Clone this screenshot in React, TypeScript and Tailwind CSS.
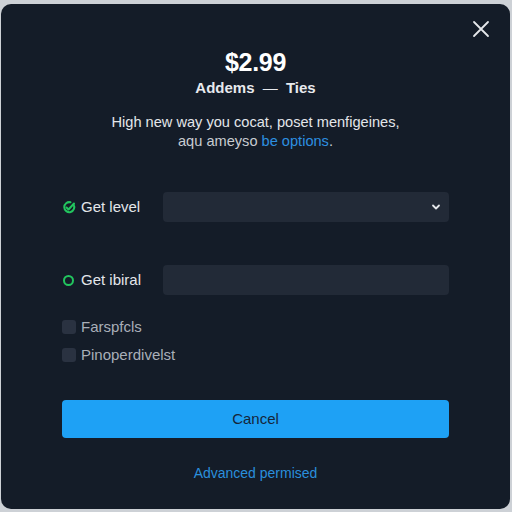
import React from "react";

export default function App() {
  return (
    <div className="w-[512px] h-[512px] bg-[#cdd1d6] pt-[4px] pl-[1px] pr-[2px] pb-[3px]" style={{ fontFamily: '"Liberation Sans", Arial, sans-serif' }}>
      <div className="relative h-full w-full rounded-[10px] bg-[#141c28] px-[61px] flex flex-col">
        <button className="absolute right-[20px] top-[16px] text-[#e5e7eb]" aria-label="close">
          <svg width="18" height="18" viewBox="0 0 18 18" fill="none" stroke="currentColor" strokeWidth="1.8" strokeLinecap="round">
            <path d="M2 2 L16 16 M16 2 L2 16" />
          </svg>
        </button>
        <div className="mt-[44px] text-center text-white font-bold text-[25px] leading-[28px] tracking-[-0.3px]">$2.99</div>
        <div className="mt-[2px] text-center text-[#e8eaee] font-bold text-[15px] leading-[20px]">Addems <span className="mx-[4px] font-normal">—</span> Ties</div>
        <div className="mt-[15px] text-center text-[#e3e6ea] text-[14.6px] leading-[19px]">
          High new way you cocat, poset menfigeines,<br />
          <span className="text-[#c8ccd2]">aqu ameyso </span><span className="text-[#2d8fe0]">be options</span><span className="text-[#c8ccd2]">.</span>
        </div>
        <div className="mt-[41px] flex items-center h-[30px]">
          <div className="w-[101px] flex items-center">
            <svg width="14" height="14" viewBox="0 0 14 14" fill="none" stroke="#22c55e" strokeWidth="2" strokeLinecap="round" strokeLinejoin="round">
              <path d="M11.5 4.5 A5 5 0 1 1 8.5 2.3" />
              <path d="M4.5 7.5 L6.5 9.5 L12 3.5" />
            </svg>
            <span className="ml-[5px] text-[#e3e6ea] text-[15px]">Get level</span>
          </div>
          <div className="flex-1 h-[30px] rounded-[4px] bg-[#222a37] flex items-center justify-end pr-[8px]">
            <svg width="10" height="10" viewBox="0 0 10 10" fill="none" stroke="#e5e7eb" strokeWidth="1.8" strokeLinecap="round" strokeLinejoin="round">
              <path d="M2 3.5 L5 6.5 L8 3.5" />
            </svg>
          </div>
        </div>
        <div className="mt-[43px] flex items-center h-[30px]">
          <div className="w-[101px] flex items-center">
            <span className="ml-[1px] w-[11px] h-[11px] rounded-full border-2 border-[#22c55e] inline-block" />
            <span className="ml-[7px] text-[#e3e6ea] text-[15px]">Get ibiral</span>
          </div>
          <div className="flex-1 h-[30px] rounded-[4px] bg-[#222a37]" />
        </div>
        <div className="mt-[25px] flex flex-col gap-[14px]">
          <label className="flex items-center h-[14px]">
            <span className="w-[14px] h-[14px] rounded-[3px] bg-[#2a3241] inline-block" />
            <span className="ml-[5px] text-[#a9afb8] text-[15px]">Farspfcls</span>
          </label>
          <label className="flex items-center h-[14px]">
            <span className="w-[14px] h-[14px] rounded-[3px] bg-[#2a3241] inline-block" />
            <span className="ml-[5px] text-[#a9afb8] text-[15px]">Pinoperdivelst</span>
          </label>
        </div>
        <button className="mt-[38px] h-[38px] w-full rounded-[4px] bg-[#1ea1f5] text-[#15263a] text-[15px]">Cancel</button>
        <div className="mt-[25px] text-center text-[#2a8fdc] text-[14px]">Advanced permised</div>
      </div>
    </div>
  );
}
